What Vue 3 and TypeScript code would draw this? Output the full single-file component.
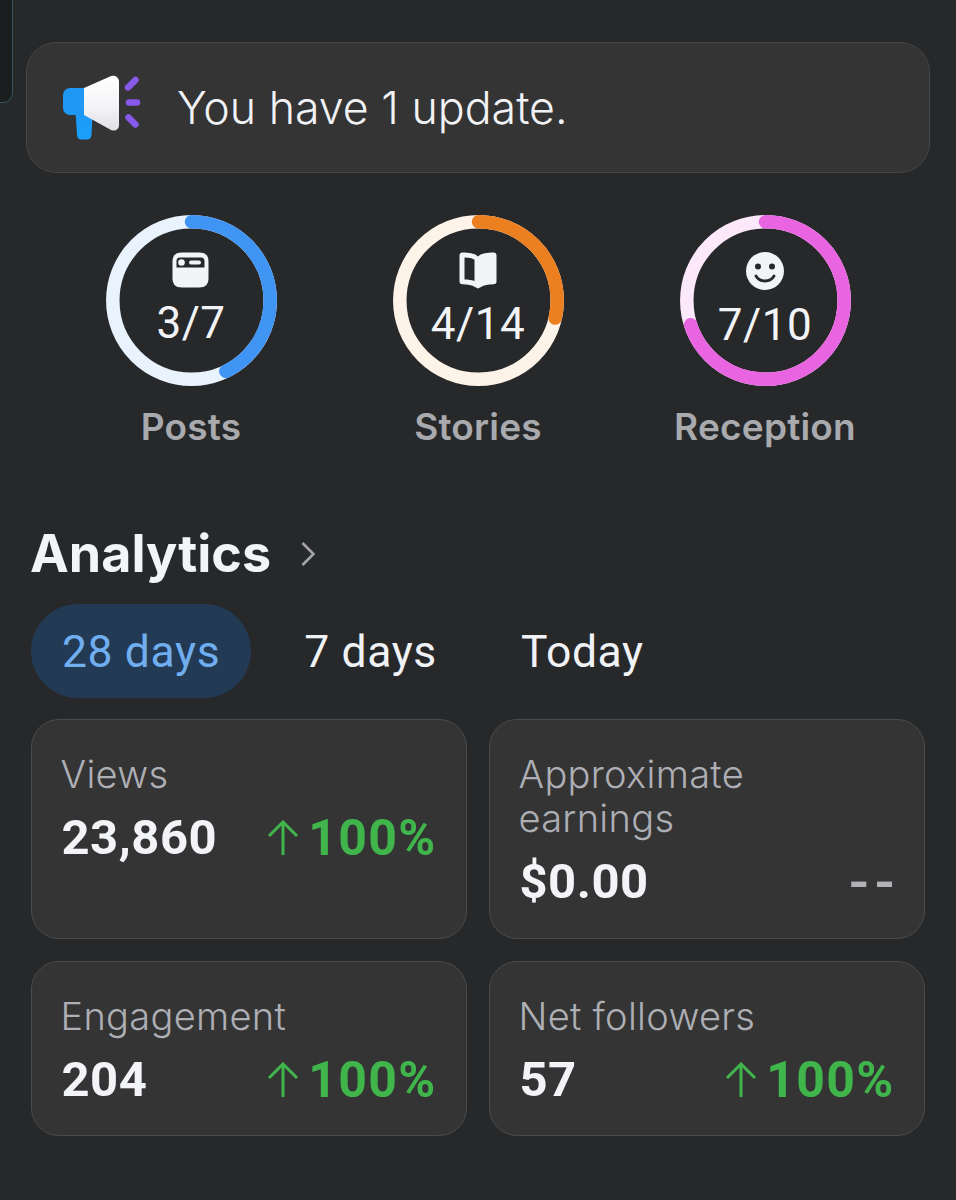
<script setup lang="ts">
interface Ring {
  label: string
  value: string
  pale: string
  strong: string
  pct: number
  icon: 'post' | 'book' | 'smile'
}
interface Card {
  label: string
  value: string
  delta: string | null
}

const rings: Ring[] = [
  { label: 'Posts', value: '3/7', pale: '#e8f3fe', strong: '#3f94f4', pct: 42.8, icon: 'post' },
  { label: 'Stories', value: '4/14', pale: '#fef3e8', strong: '#ec7f1f', pct: 28.6, icon: 'book' },
  { label: 'Reception', value: '7/10', pale: '#fce8fb', strong: '#e864e0', pct: 70, icon: 'smile' },
]
const tabs = ['28 days', '7 days', 'Today']
const cards: Card[] = [
  { label: 'Views', value: '23,860', delta: '100%' },
  { label: 'Approximate earnings', value: '$0.00', delta: null },
  { label: 'Engagement', value: '204', delta: '100%' },
  { label: 'Net followers', value: '57', delta: '100%' },
]
</script>

<template>
  <div class="page">
    <div class="corner"></div>
    <div class="banner">
      <svg class="horn" width="78" height="66" viewBox="0 0 78 66">
        <defs>
          <linearGradient id="hornWhite" x1="0" y1="0" x2="0" y2="1">
            <stop offset="0" stop-color="#ffffff" />
            <stop offset=".6" stop-color="#f3f3f6" />
            <stop offset="1" stop-color="#dedee4" />
          </linearGradient>
          <linearGradient id="hornBlue" x1="0" y1="0" x2="0" y2="1">
            <stop offset="0" stop-color="#1f98f4" />
            <stop offset="1" stop-color="#19a0fc" />
          </linearGradient>
        </defs>
        <path d="M12 30h18l-1.500 30a4.500 4.500 0 0 1-4.500 4.500h-5.500a4.500 4.500 0 0 1-4.400-3.800z" fill="url(#hornBlue)" />
        <path d="M21 13V40H7a7 7 0 0 1-7-7V20a7 7 0 0 1 7-7z" fill="#1f98f4" />
        <path d="M21 13 47 1.500C52 -.5 56 2.500 56 7v43c0 4.500-4 6.800-8 5L21 40z" fill="url(#hornWhite)" />
        <g stroke="#8659ea" stroke-width="6.500" stroke-linecap="round" fill="none">
          <path d="M65 12.500 72.500 5" />
          <path d="M66 27.500H74" />
          <path d="M65.500 42.500 72.500 49.500" />
        </g>
      </svg>
      <span class="banner-text">You have 1 update.</span>
    </div>

    <div class="stats">
      <div v-for="r in rings" :key="r.label" class="stat">
        <div class="ring">
          <svg class="ring-svg" width="171" height="171" viewBox="0 0 171 171">
            <circle cx="85.500" cy="85.500" r="78.700" fill="none" :stroke="r.pale" stroke-width="13.500" />
            <circle
              cx="85.500"
              cy="85.500"
              r="78.700"
              fill="none"
              :stroke="r.strong"
              stroke-width="13.500"
              stroke-linecap="round"
              pathLength="100"
              :stroke-dasharray="`${r.pct} 100`"
              transform="rotate(-90 85.500 85.500)"
            />
          </svg>
          <div class="ring-body">
            <svg v-if="r.icon === 'post'" class="ring-icon" width="40" height="36" viewBox="0 0 40 36">
              <path fill="#f3f4f8" d="M11 .5h17c6.500 0 9.500 3 9.500 9v16.500c0 6.500-3 9.500-9.500 9.500H11C4.500 35.500 1.500 32.500 1.500 26V9.500C1.500 3.500 4.500 .5 11 .5z" />
              <path fill="#272829" d="M9 5.500h21a3.500 3.500 0 0 1 3.500 3.500v6.500H5.500V9A3.500 3.500 0 0 1 9 5.500z" />
              <circle cx="10.500" cy="10.500" r="3.300" fill="#f3f4f8" />
              <rect x="18" y="8.500" width="12" height="4" rx="2" fill="#f3f4f8" />
            </svg>
            <svg v-else-if="r.icon === 'book'" class="ring-icon" width="40" height="37" viewBox="0 0 40 37">
              <path fill="#f3f4f8" d="M4.500 0.500C11 .5 17 1.500 20 4.500 23 1.500 29 .5 35.500 .5 37.500 .5 38.500 1.500 38.500 3.500v26c0 1.800-1 2.800-3 2.800-5.500 0-9.500.8-12.500 2.700L20 36.500 17 35C14 33.200 10 32.300 4.500 32.300c-2 0-3-1-3-2.800v-26C1.500 1.500 2.500 .5 4.500 .5z" />
              <path fill="#272829" d="M6.500 5.500C11 5.500 14 6.200 16.500 7.800V29C13.500 28 10.500 27.500 6.500 27.500z" />
            </svg>
            <svg v-else class="ring-icon" width="40" height="38" viewBox="0 0 40 38">
              <circle cx="20" cy="19" r="19" fill="#f3f4f8" />
              <circle cx="13" cy="14.500" r="3" fill="#272829" />
              <circle cx="27" cy="14.500" r="3" fill="#272829" />
              <path d="M11 24c2 3.500 5.500 5 9 5s7-1.500 9-5" fill="none" stroke="#272829" stroke-width="2.800" stroke-linecap="round" />
            </svg>
            <span class="ring-value">{{ r.value }}</span>
          </div>
        </div>
        <div class="stat-label">{{ r.label }}</div>
      </div>
    </div>

    <section class="analytics">
      <div class="heading">
        <h2 class="title">Analytics</h2>
        <svg class="chev" width="16" height="26" viewBox="0 0 16 26">
          <path d="M2.500 2 13.500 13 2.500 24" fill="none" stroke="#a4a5a9" stroke-width="2.600" />
        </svg>
      </div>

      <div class="tabs">
        <div v-for="(t, i) in tabs" :key="t" class="tab" :class="{ active: i === 0 }">{{ t }}</div>
      </div>

      <div class="cards">
        <div v-for="c in cards" :key="c.label" class="card">
          <div class="card-label">{{ c.label }}</div>
          <div class="card-row">
            <span class="card-value">{{ c.value }}</span>
            <span v-if="c.delta" class="delta">
              <svg width="32" height="36" viewBox="0 0 32 36">
                <path d="M16 35V2M2 16 16 2 30 16" fill="none" stroke="#3fb54b" stroke-width="3" />
              </svg>
              {{ c.delta }}
            </span>
            <span v-else class="dash">--</span>
          </div>
        </div>
      </div>
    </section>
  </div>
</template>

<style>
html,
body {
  margin: 0;
  background: #272829;
}
</style>

<style scoped>
.page {
  position: relative;
  box-sizing: border-box;
  width: 956px;
  height: 1200px;
  padding: 42px 26px 0;
  background: #272829;
  font-family: Roboto, "Noto Sans", sans-serif;
  color: #f3f4f8;
  overflow: hidden;
}
.corner {
  position: absolute;
  left: -20px;
  top: -20px;
  width: 33px;
  height: 123px;
  box-sizing: border-box;
  border: 1.500px solid #2c5862;
  border-radius: 10px;
  background: #1c1d1f;
}
.banner {
  box-sizing: border-box;
  display: flex;
  align-items: center;
  height: 131px;
  padding: 0 0 0 36px;
  background: #343434;
  border: 1.500px solid #444547;
  border-radius: 30px;
}
.horn {
  flex: none;
  margin-top: 1px;
}
.banner-text {
  margin-left: 36px;
  font-family: Inter, Roboto, sans-serif;
  font-weight: 300;
  font-size: 44.700px;
  color: #f1f2f5;
}
.stats {
  display: flex;
  justify-content: center;
  margin-top: 42px;
}
.stat {
  width: 287px;
  display: flex;
  flex-direction: column;
  align-items: center;
}
.ring {
  display: grid;
  width: 171px;
  height: 171px;
}
.ring-svg,
.ring-body {
  grid-area: 1 / 1;
}
.ring-body {
  display: flex;
  flex-direction: column;
  align-items: center;
  padding-top: 37px;
}
.ring-icon {
  display: block;
  flex: none;
}
.ring-value {
  margin-top: 9px;
  font-size: 44px;
  line-height: 52px;
  letter-spacing: 0.5px;
  color: #f3f4f8;
}
.stat-label {
  margin-top: 18px;
  font-family: Inter, Roboto, sans-serif;
  font-size: 37px;
  line-height: 46px;
  font-weight: 600;
  letter-spacing: 0.2px;
  color: #a9aaae;
}
.analytics {
  padding: 0 5px;
  margin-top: 68px;
}
.heading {
  display: flex;
  align-items: center;
  height: 72px;
}
.title {
  margin: -1px 0 0 -1px;
  font-family: Inter, Roboto, sans-serif;
  font-size: 52px;
  line-height: 72px;
  font-weight: 700;
  color: #f3f4f8;
}
.chev {
  margin-left: 29px;
}
.tabs {
  display: flex;
  margin-top: 14px;
  gap: 22px;
}
.tab {
  display: flex;
  align-items: center;
  height: 94px;
  padding: 2px 31px 0;
  box-sizing: border-box;
  border-radius: 47px;
  font-size: 44.500px;
  letter-spacing: 0.6px;
  color: #f1f2f5;
}
.tab.active {
  background: #233a55;
  color: #70aef0;
}
.cards {
  display: grid;
  grid-template-columns: 436px 436px;
  grid-template-rows: 220px 175px;
  gap: 22px;
  margin-top: 21px;
}
.card {
  box-sizing: border-box;
  padding: 31.500px 29.500px 0;
  background: #343434;
  border: 1.500px solid #4a4b4d;
  border-radius: 28px;
}
.card-label {
  margin-left: -1px;
  font-family: Inter, Roboto, sans-serif;
  font-weight: 300;
  font-size: 38px;
  line-height: 44px;
  letter-spacing: 0.3px;
  color: #aeafb5;
}
.card-row {
  display: flex;
  justify-content: space-between;
  align-items: center;
  margin-top: 14px;
  height: 56px;
}
.card-value {
  font-size: 49px;
  font-weight: 700;
  letter-spacing: 0.5px;
  color: #f3f4f8;
}
.delta {
  display: flex;
  align-items: center;
  gap: 9px;
  font-size: 50px;
  font-weight: 700;
  letter-spacing: 1.300px;
  color: #3fb54b;
}
.dash {
  font-size: 58px;
  line-height: 56px;
  font-weight: 500;
  letter-spacing: 6px;
  margin-right: -6px;
  color: #b1b2b8;
}
</style>
